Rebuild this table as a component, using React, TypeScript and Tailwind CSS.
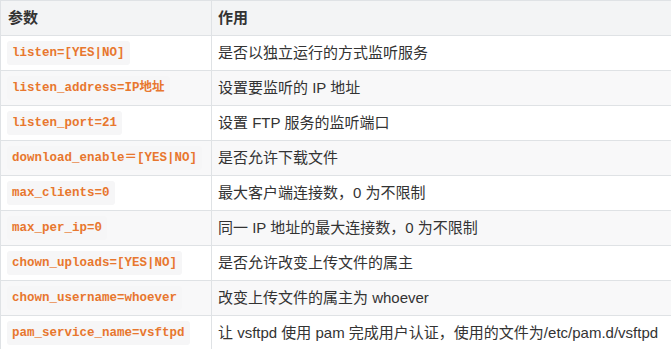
const rows: [string, string][] = [
  ["listen=[YES|NO]", "是否以独立运行的方式监听服务"],
  ["listen_address=IP地址", "设置要监听的 IP 地址"],
  ["listen_port=21", "设置 FTP 服务的监听端口"],
  ["download_enable＝[YES|NO]", "是否允许下载文件"],
  ["max_clients=0", "最大客户端连接数，0 为不限制"],
  ["max_per_ip=0", "同一 IP 地址的最大连接数，0 为不限制"],
  ["chown_uploads=[YES|NO]", "是否允许改变上传文件的属主"],
  ["chown_username=whoever", "改变上传文件的属主为 whoever"],
  ["pam_service_name=vsftpd", "让 vsftpd 使用 pam 完成用户认证，使用的文件为/etc/pam.d/vsftpd"],
];

export default function App() {
  return (
    <div className="w-[671px] h-[349px] overflow-hidden bg-white font-['Liberation_Sans','Noto_Sans_CJK_SC',sans-serif] text-[#333]">
      <div className="w-[720px] border-l border-t border-[#dfe2e5]">
        {/* header */}
        <div className="flex h-[35px] border-b border-[#dfe2e5] bg-[#f3f4f5] text-[15px] font-bold">
          <div className="w-[211px] shrink-0 border-r border-[#dfe2e5] flex items-center pl-[7px]">参数</div>
          <div className="flex-1 flex items-center pl-[6px]">作用</div>
        </div>
        {rows.map(([param, desc], i) => (
          <div
            key={param}
            className={`flex h-[35px] border-b border-[#dfe2e5] ${i % 2 === 1 ? "bg-[#f8f8f9]" : "bg-white"}`}
          >
            <div className="w-[211px] shrink-0 border-r border-[#dfe2e5] flex items-center pl-[6px]">
              <span className="px-[5px] py-[2px] rounded-[3px] bg-[#f6f6f7] text-[#e8772e] font-bold text-[12.5px] leading-[20px] font-['Liberation_Mono','Noto_Sans_CJK_SC',monospace]">
                {param}
              </span>
            </div>
            <div className="flex-1 flex items-center pl-[6px] text-[15px] whitespace-nowrap">{desc}</div>
          </div>
        ))}
      </div>
    </div>
  );
}
